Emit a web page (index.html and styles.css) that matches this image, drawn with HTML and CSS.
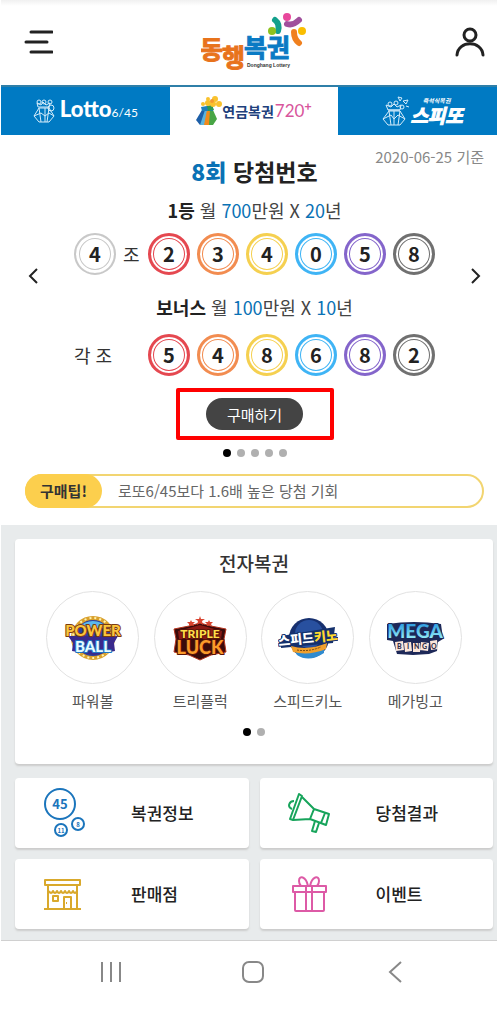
FILE: index.html
```html
<!doctype html>
<html lang="ko">
<head>
    <meta charset="UTF-8">
    <meta name="viewport" content="width=device-width, initial-scale=1.0">
    <title>동행복권</title>
    <link rel="stylesheet" href="styles.css">
</head>
<body>
    <header class="header">
        <button class="icon-btn" aria-label="메뉴">
            <svg width="30" height="28" viewBox="0 0 30 28" fill="none" stroke="#222" stroke-width="3" stroke-linecap="round">
                <path d="M8 4h21M3 14h21M8 24h21"/>
            </svg>
        </button>
        <a class="logo" href="#" aria-label="동행복권">
            <svg width="106" height="60" viewBox="0 0 106 60">
                <g class="logo-text" font-size="25">
                    <text x="-1" y="47" fill="#e8731c" stroke="#e8731c">동</text>
                    <text x="21" y="55" fill="#e8731c" stroke="#e8731c">행</text>
                    <text x="43" y="45" fill="#0a7ac4" stroke="#0a7ac4">복권</text>
                </g>
                <text class="logo-sub" x="46" y="55">Donghang Lottery</text>
                <g fill="none" stroke-width="6" stroke-linecap="round">
                    <path d="M74 8q5 4 3 11" stroke="#12a08c"/>
                    <path d="M86 12q6 2 12-4" stroke="#a0509c"/>
                    <path d="M93 20q0 7 5 11" stroke="#f0801e"/>
                </g>
                <circle cx="71" cy="19" r="4" fill="#8dc21f"/>
                <circle cx="86" cy="5" r="4" fill="#e8489c"/>
                <circle cx="101" cy="19" r="4" fill="#fabe00"/>
            </svg>
        </a>
        <button class="icon-btn" aria-label="내 정보">
            <svg width="30" height="30" viewBox="0 0 30 30" fill="none" stroke="#222" stroke-width="3" stroke-linecap="round">
                <circle cx="15" cy="8" r="6"/>
                <path d="M2 28C3 13 27 13 28 28"/>
            </svg>
        </button>
    </header>

    <nav class="tabs">
        <a class="tab" href="#">
            <svg width="24" height="24" viewBox="0 0 24 24" fill="none" stroke="#d5ecfa" stroke-width="1">
                <path d="M6 9L1 17l5 6h10l5-6-5-8zM6 9l2 14M12 9v14M16 9l-2 14M1 17l7-3 4 3 4-3 5 3"/>
                <path d="M5 8L4 4l4 2 2-3 3 3 4-2-1 5M5 8h11"/>
                <circle cx="6" cy="3" r="2"/><circle cx="11" cy="3" r="2"/><circle cx="17" cy="3" r="2"/><circle cx="18" cy="9" r="3"/>
            </svg>
            <span class="lotto">Lotto<small>6/45</small></span>
        </a>
        <a class="tab active" href="#">
            <svg width="26" height="30" viewBox="0 0 26 30">
                <path d="M6 14L0 24l4 5h5l2-15z" fill="#1d5fa8"/>
                <path d="M9 14L4 29h8l1-14z" fill="#5bb4dd"/>
                <path d="M11 14l-3 15h8l-2-15z" fill="#f08a1c"/>
                <path d="M14 14l-1 15h4l4-6-4-9z" fill="#48a545"/>
                <path d="M5 11l12-2v6H6z" fill="#1f7fbb"/>
                <path d="M11 10l5-1 2 5-6 1z" fill="#2e9a53"/>
                <g fill="#f9c22d">
                    <circle cx="12" cy="7" r="3"/><circle cx="17" cy="8" r="3"/><circle cx="12" cy="3" r="2"/>
                    <circle cx="19" cy="3" r="3"/><circle cx="23" cy="8" r="3"/><circle cx="7" cy="8" r="2"/>
                </g>
                <circle cx="16" cy="5" r="2" fill="#f39a2b"/>
            </svg>
            <span class="pension">연금복권<em>720</em><sup>+</sup></span>
        </a>
        <a class="tab last" href="#">
            <svg width="28" height="30" viewBox="0 0 28 30" fill="none" stroke="#d5ecfa" stroke-width="1">
                <path d="M7 15L1 23l5 6h12l5-6-5-8zM7 15l2 14M12 15v14M18 15l-2 14M1 23l8-4 3 4 4-4 7 4"/>
                <path d="M6 14L4 9l5 2 3-3 3 3 4-2-1 5zM6 14h12"/>
                <circle cx="8" cy="8" r="2"/><circle cx="14" cy="7" r="2"/><circle cx="20" cy="11" r="2"/>
                <path d="M16 1l4 1-2 3zM21 5l5-1-2 4zM24 10l3 1"/>
            </svg>
            <span class="speetto"><small>즉석식복권</small>스피또</span>
        </a>
    </nav>

    <section class="result">
        <div class="result-head">
            <h1><b>8회</b> 당첨번호</h1>
            <span class="date">2020-06-25 기준</span>
        </div>
        <div class="slider">
            <button class="arrow" aria-label="이전">
                <svg width="10" height="16" viewBox="0 0 10 16" fill="none" stroke="#222" stroke-width="2"><path d="M9 1L2 8l7 7"/></svg>
            </button>
            <div class="slide">
                <p class="prize"><strong>1등</strong> 월 <b>700</b>만원 X <b>20</b>년</p>
                <div class="numbers">
                    <div class="group"><span class="ball white">4</span>조</div>
                    <span class="ball red">2</span>
                    <span class="ball orange">3</span>
                    <span class="ball yellow">4</span>
                    <span class="ball blue">0</span>
                    <span class="ball purple">5</span>
                    <span class="ball gray">8</span>
                </div>
                <p class="prize">
                    <strong>보너스</strong> 월 <b>100</b>만원 X <b>10</b>년
                </p>
                <div class="numbers">
                    <div class="group">각 조</div>
                    <span class="ball red">5</span>
                    <span class="ball orange">4</span>
                    <span class="ball yellow">8</span>
                    <span class="ball blue">6</span>
                    <span class="ball purple">8</span>
                    <span class="ball gray">2</span>
                </div>
            </div>
            <button class="arrow" aria-label="다음">
                <svg width="10" height="16" viewBox="0 0 10 16" fill="none" stroke="#222" stroke-width="2"><path d="M1 1l7 7-7 7"/></svg>
            </button>
        </div>
        <div class="buy-box"><button class="buy">구매하기</button></div>
        <div class="dots"><i class="on"></i><i></i><i></i><i></i><i></i></div>
        <div class="tip"><strong>구매팁!</strong><span>로또6/45보다 1.6배 높은 당첨 기회</span></div>
    </section>

    <main class="main">
        <section class="card">
            <h2>전자복권</h2>
            <div class="games">
                <a class="game" href="#">
                    <span class="circle">
                        <svg class="game-logo" width="60" height="48" viewBox="0 0 60 48">
                            <circle cx="30" cy="24" r="20" fill="#2b3f9e" stroke="#d9a02c" stroke-width="4"/>
                            <circle cx="30" cy="24" r="20" fill="none" stroke="#fff3b0" stroke-width="2" stroke-dasharray="2 3"/>
                            <path d="M14 14q16-14 32 0" fill="#5cb8ec"/>
                            <path d="M5 22l50 0-4 7 1 8-21 4-22-4 1-8z" fill="#3a2a8c"/>
                            <text class="power" x="30" y="22" font-size="15">POWER</text>
                            <text class="ball-text" x="30" y="38" font-size="15">BALL</text>
                        </svg>
                    </span>
                    파워볼
                </a>
                <a class="game" href="#">
                    <span class="circle">
                        <svg class="game-logo" width="60" height="48" viewBox="0 0 60 48">
                            <path d="M4 15l15-3 11-3 11 3 15 3-2 10 2 13-15 3-11 5-11-5-15-3 2-13z" fill="#3a0b0b" stroke="#b8361f" stroke-width="1"/>
                            <path d="M8 17l22-6 22 6-1 8H9z" fill="#8a1a14"/>
                            <path d="M30 2l1 3 4 0-3 2 1 4-3-2-3 2 1-4-3-2 4 0zM21 6l1 2h3l-2 2 1 2-3-1-2 1 0-2-2-2h3zM39 6l1 2h3l-2 2 1 2-3-1-2 1 0-2-2-2h3z" fill="#d8432f"/>
                            <text class="luck" x="30" y="40" font-size="18">LUCK</text>
                            <text class="triple" x="30" y="24" font-size="12">TRIPLE</text>
                        </svg>
                    </span>
                    트리플럭
                </a>
                <a class="game" href="#">
                    <span class="circle">
                        <svg class="game-logo" width="60" height="48" viewBox="0 0 60 48">
                            <circle cx="31" cy="24" r="20" fill="#17306f"/>
                            <circle cx="31" cy="20" r="14" fill="#28509f"/>
                            <path d="M16 36q15 7 30-3v6q-15 10-27 2z" fill="#2f8bd0"/>
                            <path d="M3 22l54-9-2 16-52 5z" fill="#14306c"/>
                            <path d="M13 32q17 5 36-3l-1 6q-17 7-33 3z" fill="#f0a02c"/>
                            <path d="M19 36q12 2 24-3" stroke="#7a4a10" stroke-dasharray="2 1" fill="none"/>
                            <g transform="rotate(-6 30 24)">
                                <text class="keno" x="30" y="29" font-size="13">스피드<tspan fill="#ffd92e">키노</tspan></text>
                            </g>
                        </svg>
                    </span>
                    스피드키노
                </a>
                <a class="game" href="#">
                    <span class="circle">
                        <svg class="game-logo" width="60" height="48" viewBox="0 0 60 48">
                            <defs>
                                <linearGradient id="mega" x1="0" y1="0" x2="0" y2="1">
                                    <stop offset="0.2" stop-color="#2b9be0"/>
                                    <stop offset="0.8" stop-color="#8ee6f5"/>
                                </linearGradient>
                            </defs>
                            <path d="M2 10q27-4 54 0l2 15-5 3-1 9-8 3-16 1-16-1-4-13-6-1z" fill="#1d2858"/>
                            <text class="mega" x="30" y="24" font-size="19">MEGA</text>
                            <g fill="#fbe6da">
                                <path d="M10 28l8-1 1 9-8 1zM19 29l7-1 1 9-7 1zM28 29h7v9h-7zM36 28l8 1-1 8-8-1zM45 27l7-1 1 9-7 1z"/>
                            </g>
                            <text class="bingo" x="12" y="35" font-size="7">B<tspan x="22">I</tspan><tspan x="29">N</tspan><tspan x="37">G</tspan><tspan x="46">O</tspan></text>
                        </svg>
                    </span>
                    메가빙고
                </a>
            </div>
            <div class="dots"><i class="on"></i><i></i></div>
        </section>

        <div class="tiles">
            <a class="tile" href="#">
                <svg width="44" height="52" viewBox="0 0 44 52" fill="none" stroke="#1b75bc" stroke-width="2">
                    <circle cx="17" cy="17" r="15"/>
                    <circle cx="35" cy="37" r="6"/>
                    <circle cx="18" cy="43" r="6"/>
                    <g class="ball-nums" fill="#1b75bc" stroke="none">
                        <text x="17" y="22" font-size="13">45</text>
                        <text x="35" y="40" font-size="6">8</text>
                        <text x="18" y="46" font-size="6">11</text>
                    </g>
                </svg>
                복권정보
            </a>
            <a class="tile" href="#">
                <svg width="44" height="52" viewBox="0 0 44 52" fill="none" stroke="#17a45b" stroke-width="2" stroke-linejoin="round">
                    <path d="M11 7l3 2L5 33l-3-1z"/>
                    <path d="M14 10l12 12-4 10-17 1M26 22l15 5-3 11-16-6M37 26l-4 10"/>
                    <path d="M27 34l-3 10 4 1 3-9M6 14c-5 0-7 6-2 8"/>
                </svg>
                당첨결과
            </a>
            <a class="tile" href="#">
                <svg width="44" height="52" viewBox="0 0 44 52" fill="none" stroke="#d9a92c" stroke-width="2" stroke-linejoin="round">
                    <path d="M2 12h35v5H2zM5 17v24M34 17v24M1 41h37"/>
                    <path d="M6 23q2 4 4 0q2 4 4 0q2 4 4 0q2 4 4 0q2 4 4 0q2 4 4 0q2 4 4 0"/>
                    <path d="M10 28h5v5h-5zM21 41V29h7v12M23 35h1"/>
                </svg>
                판매점
            </a>
            <a class="tile" href="#">
                <svg width="44" height="52" viewBox="0 0 44 52" fill="none" stroke="#dd5aa6" stroke-width="2" stroke-linejoin="round">
                    <path d="M5 18h33v6H5zM7 24v18q0 1 1 1h27q1 0 1-1V24M18 18v25M24 18v25"/>
                    <path d="M20 18c-2-10-9-11-9-5 0 3 1 4 2 5M22 18c2-10 9-11 9-5 0 3-1 4-2 5"/>
                </svg>
                이벤트
            </a>
        </div>
    </main>

    <footer class="sysnav">
        <button aria-label="최근 앱">
            <svg width="24" height="24" viewBox="0 0 24 24" fill="none" stroke="#888" stroke-width="2"><path d="M3 2v20M12 2v20M21 2v20"/></svg>
        </button>
        <button aria-label="홈">
            <svg width="24" height="24" viewBox="0 0 24 24" fill="none" stroke="#888" stroke-width="2"><rect x="2" y="2" width="20" height="20" rx="6"/></svg>
        </button>
        <button aria-label="뒤로">
            <svg width="24" height="24" viewBox="0 0 24 24" fill="none" stroke="#888" stroke-width="2"><path d="M18 2L7 12l11 10"/></svg>
        </button>
    </footer>
</body>
</html>
```
FILE: styles.css
```css
* {
    box-sizing: border-box;
}

body {
    margin: 0;
    padding: 0 1px;
    background: #fff;
    color: #333;
    font-family: 'Noto Sans CJK KR', sans-serif;
    font-size: 18px;
    line-height: 24px;
}

h1, h2, p {
    margin: 0;
}

a {
    color: inherit;
    text-decoration: none;
}

button {
    padding: 0;
    border: none;
    background: none;
    font-family: inherit;
    cursor: pointer;
}

svg {
    display: block;
    flex: none;
}

/* header */
.header {
    display: flex;
    justify-content: space-between;
    align-items: center;
    height: 85px;
    padding: 0 12px 2px 22px;
    background: linear-gradient(#f0f0f0, #fff 6px);
}

.logo-text {
    font-weight: bold;
    stroke-width: 1;
}

.logo-sub {
    font: bold 5px 'Liberation Sans', sans-serif;
    fill: #333;
}

/* tabs */
.tabs {
    display: flex;
    border-top: 2px solid #2f7fa8;
}

.tab {
    width: 34%;
    display: flex;
    justify-content: center;
    align-items: center;
    gap: 3px;
    height: 48px;
    background: #007ac3;
    color: #fff;
}

.tab.active {
    gap: 0;
    background: #fff;
}

.tab.last {
    width: 32%;
    padding-left: 10px;
    gap: 0;
}

.lotto {
    font-family: Lato, sans-serif;
    font-size: 22px;
    font-weight: 900;
}

.lotto small {
    font-size: 12px;
    font-weight: normal;
}

.pension {
    color: #20407c;
    font-size: 14px;
    font-weight: bold;
}

.pension em {
    margin-left: 1px;
    color: #d8559c;
    font-family: Lato, sans-serif;
    font-size: 17px;
    font-style: normal;
    font-weight: normal;
}

.pension sup {
    color: #d8559c;
    font-size: 12px;
    line-height: 0;
}

.speetto {
    font-size: 19px;
    font-style: italic;
    font-weight: bold;
    line-height: 20px;
    -webkit-text-stroke: 1px #fff;
}

.speetto small {
    display: block;
    font-size: 6px;
    line-height: 8px;
    text-align: center;
    -webkit-text-stroke: 0;
}

/* winning numbers */
.result {
    padding: 12px 13px 17px 24px;
}

.result-head {
    display: grid;
    grid-template-columns: 1fr auto 1fr;
}

.result-head h1 {
    grid-column: 2;
    padding-top: 8px;
    color: #222;
    font-size: 23px;
    line-height: 32px;
}

.result-head h1 b {
    color: #0a72b5;
}

.date {
    color: #888;
    font-size: 15px;
    line-height: 20px;
    text-align: right;
}

.slider {
    display: flex;
    justify-content: space-between;
    align-items: center;
    padding: 11px 3px 0;
}

.arrow {
    padding-bottom: 34px;
}

.slide {
    display: flex;
    flex-direction: column;
    align-items: center;
}

.prize {
    color: #444;
}

.prize strong {
    color: #222;
}

.prize b {
    color: #0a72b5;
    font-weight: normal;
}

.numbers {
    display: flex;
    gap: 7px;
    padding: 11px 0 20px;
}

.numbers + .prize + .numbers {
    padding: 15px 0 12px;
}

.group {
    display: flex;
    align-items: center;
    gap: 7px;
    width: 67px;
    white-space: pre;
}

.ball {
    display: flex;
    flex: none;
    justify-content: center;
    align-items: center;
    width: 42px;
    height: 42px;
    border: 3px solid;
    border-radius: 50%;
    box-shadow: inset 0 0 0 2px #fff, inset 0 0 0 3px;
    font-size: 20px;
    font-weight: bold;
    -webkit-text-fill-color: #222;
}

.white {
    border-width: 2px;
    color: #c8c8c8;
    box-shadow: inset 0 0 0 3px #fff, inset 0 0 0 4px;
}

.red { color: #e54850; }
.orange { color: #f28c50; }
.yellow { color: #f5d050; }
.blue { color: #3fb4f5; }
.purple { color: #8465cb; }
.gray { color: #707070; }

.buy-box {
    width: 158px;
    margin: 0 auto;
    padding: 6px;
    border: 4px solid #f00;
    border-radius: 2px;
    text-align: center;
}

.buy {
    display: block;
    width: 97px;
    height: 32px;
    margin: 0 auto;
    border-radius: 16px;
    background: #444;
    color: #fff;
    font-size: 15px;
}

.dots {
    display: flex;
    justify-content: center;
    gap: 6px;
}

.dots i {
    width: 8px;
    height: 8px;
    border-radius: 50%;
    background: #b0b0b0;
}

.dots .on {
    background: #000;
}

.result .dots {
    padding: 9px 0 17px;
}

.tip {
    display: flex;
    border: 2px solid #f2d571;
    border-radius: 17px;
    font-size: 15px;
    line-height: 30px;
}

.tip strong {
    margin: -2px 0 -2px -2px;
    padding: 2px 15px;
    border-radius: 17px;
    background: #fccf4d;
}

.tip span {
    padding-left: 16px;
    color: #666;
}

/* gray area */
.main {
    padding: 14px 4px 11px 14px;
    border-bottom: 1px solid #d0d0d0;
    background: #e8ebec;
}

.card,
.tile {
    border-radius: 4px;
    background: #fff;
    box-shadow: 0 2px 2px #ccc;
}

.card {
    margin-bottom: 14px;
    padding: 12px 24px 28px;
}

.card h2 {
    font-size: 19px;
    font-weight: 500;
    text-align: center;
}

.games {
    display: flex;
    padding: 16px 0 15px;
}

.game {
    display: flex;
    flex: 1;
    flex-direction: column;
    align-items: center;
    gap: 5px;
    font-size: 15px;
    color: #555;
    white-space: nowrap;
}

.circle {
    display: flex;
    justify-content: center;
    align-items: center;
    width: 93px;
    height: 93px;
    border: 1px solid #e2e2e2;
    border-radius: 50%;
}

.game-logo {
    font-family: Lato, 'Noto Sans CJK KR', sans-serif;
    font-weight: 900;
    text-anchor: middle;
}

.game-logo text {
    paint-order: stroke;
    stroke-linejoin: round;
    stroke-width: 2;
}

.power { fill: #fbc63c; stroke: #7c3a10; }
.ball-text { fill: #e6fbff; stroke: #2176c4; }
.triple { fill: #ffdf4a; stroke: #5a1408; }
.luck { fill: #fb9a2a; stroke: #5a1408; }
.keno { fill: #fff; stroke: #14306c; }
.mega { fill: url(#mega); stroke: #1d2858; }

.game-logo .bingo {
    fill: #33304a;
    stroke: none;
    text-anchor: start;
}

.tiles {
    display: grid;
    grid-template-columns: 1fr 1fr;
    gap: 11px;
}

.tile {
    display: flex;
    align-items: center;
    gap: 44px;
    height: 70px;
    padding-left: 28px;
    color: #222;
    font-size: 17px;
    font-weight: 500;
}

.ball-nums {
    font-weight: bold;
    text-anchor: middle;
}

/* phone buttons */
.sysnav {
    display: flex;
    justify-content: center;
    gap: 118px;
    padding: 19px 0 24px 8px;
}
```
